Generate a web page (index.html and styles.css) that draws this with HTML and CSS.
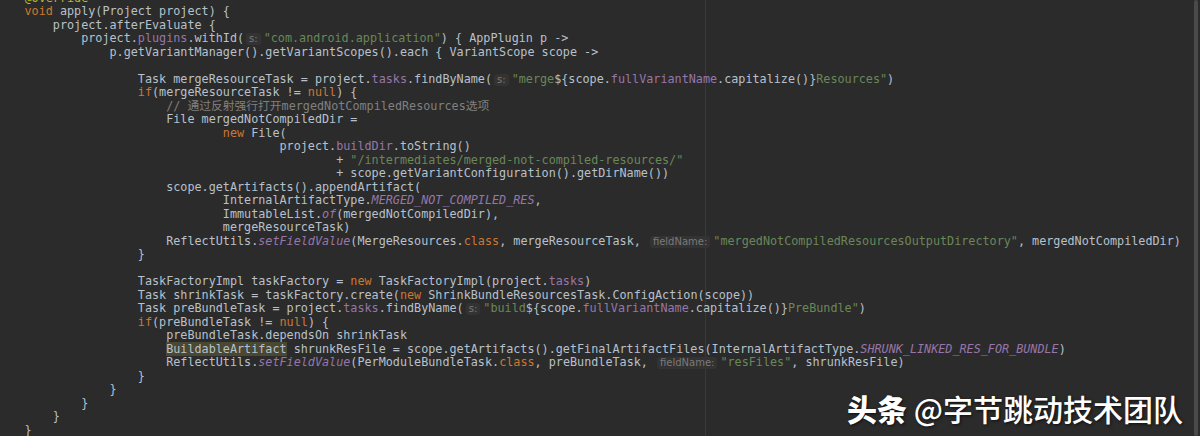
FILE: index.html
```html
<!DOCTYPE html>
<html lang="zh-CN">
<head>
    <meta charset="UTF-8">
    <title>PreBundle plugin</title>
    <link rel="stylesheet" href="styles.css">
</head>
<body>
    <div class="window">
        <div class="editor">
<pre class="code"><span class="a">@Override</span>
<span class="k">void</span> apply(Project project) {
    project.afterEvaluate {
        project.<span class="f">plugins</span>.withId(<span class="h">s:</span><span class="s">"com.android.application"</span>) { AppPlugin p -&gt;
            p.getVariantManager().getVariantScopes().each { VariantScope scope -&gt;

                Task mergeResourceTask = project.<span class="f">tasks</span>.findByName(<span class="h">s:</span><span class="s">"merge</span>${scope.<span class="f">fullVariantName</span>.capitalize()}<span class="s">Resources"</span>)
                <span class="k">if</span>(mergeResourceTask != <span class="k">null</span>) {
                    <span class="c">// 通过反射强行打开mergedNotCompiledResources选项</span>
                    File mergedNotCompiledDir =
                            <span class="k">new</span> File(
                                    project.<span class="f">buildDir</span>.toString()
                                            + <span class="s">"/intermediates/merged-not-compiled-resources/"</span>
                                            + scope.getVariantConfiguration().getDirName())
                    scope.getArtifacts().appendArtifact(
                            InternalArtifactType.<span class="f i">MERGED_NOT_COMPILED_RES</span>,
                            ImmutableList.<span class="f i">of</span>(mergedNotCompiledDir),
                            mergeResourceTask)
                    ReflectUtils.<span class="f i">setFieldValue</span>(MergeResources.<span class="k">class</span>, mergeResourceTask, <span class="h">fieldName:</span><span class="s">"mergedNotCompiledResourcesOutputDirectory"</span>, mergedNotCompiledDir)
                }

                TaskFactoryImpl taskFactory = <span class="k">new</span> TaskFactoryImpl(project.<span class="f">tasks</span>)
                Task shrinkTask = taskFactory.create(<span class="k">new</span> ShrinkBundleResourcesTask.ConfigAction(scope))
                Task preBundleTask = project.<span class="f">tasks</span>.findByName(<span class="h">s:</span><span class="s">"build</span>${scope.<span class="f">fullVariantName</span>.capitalize()}<span class="s">PreBundle"</span>)
                <span class="k">if</span>(preBundleTask != <span class="k">null</span>) {
                    preBundleTask.dependsOn shrinkTask
                    <span class="w">BuildableArtifact</span> shrunkResFile = scope.getArtifacts().getFinalArtifactFiles(InternalArtifactType.<span class="f i">SHRUNK_LINKED_RES_FOR_BUNDLE</span>)
                    ReflectUtils.<span class="f i">setFieldValue</span>(PerModuleBundleTask.<span class="k">class</span>, preBundleTask, <span class="h">fieldName:</span><span class="s">"resFiles"</span>, shrunkResFile)
                }
            }
        }
    }
}</pre>
            <div class="watermark"><b>头条</b> @字节跳动技术团队</div>
        </div>
        <div class="scrollbar"><div class="thumb"></div></div>
    </div>
</body>
</html>
```

FILE: styles.css
```css
* {
    margin: 0;
    padding: 0;
    box-sizing: border-box;
}

body {
    background: #2b2b2b;
    overflow: hidden;
}

.window {
    display: flex;
    height: 436px;
}

/* editor area with the right margin guide */
.editor {
    position: relative;
    flex: 1;
    overflow: hidden;
    background:
        linear-gradient(to right, transparent 705px, #393939 705px, #393939 706px, transparent 706px),
        #2b2b2b;
}

.code {
    margin-top: -8px;
    padding-left: 24.5px;
    font-family: "DejaVu Sans Mono", "Noto Sans CJK SC", monospace;
    font-size: 11.77px;
    line-height: 13.48px;
    color: #b8c1cb;
    white-space: pre;
}

.k { color: #cc7832; }
.s { color: #6a8759; }
.f { color: #9876aa; }
.i { font-style: italic; }
.a { color: #bbb529; }
.c { color: #808080; }

.w {
    background: #4a4732;
}

/* parameter hints */
.h {
    display: inline-block;
    margin: 0 3px 0 2px;
    padding: 0 3px;
    font-family: "DejaVu Sans", sans-serif;
    font-size: 10px;
    line-height: 12px;
    color: #7a7a7a;
    background: #333333;
    border-radius: 3px;
}

.watermark {
    position: absolute;
    right: 9px;
    bottom: 13px;
    font-family: "Noto Sans CJK SC", sans-serif;
    font-size: 30px;
    font-weight: 500;
    line-height: 1;
    color: #ffffff;
    text-shadow: 1px 1px 3px rgba(0, 0, 0, 0.7);
    white-space: nowrap;
}

.watermark b {
    font-weight: 900;
}

.scrollbar {
    width: 8px;
    background: #2b2b2b;
    display: flex;
    justify-content: center;
}

.thumb {
    width: 4px;
    height: 100%;
    background: #4a4a4a;
    border-radius: 2px;
}
```
